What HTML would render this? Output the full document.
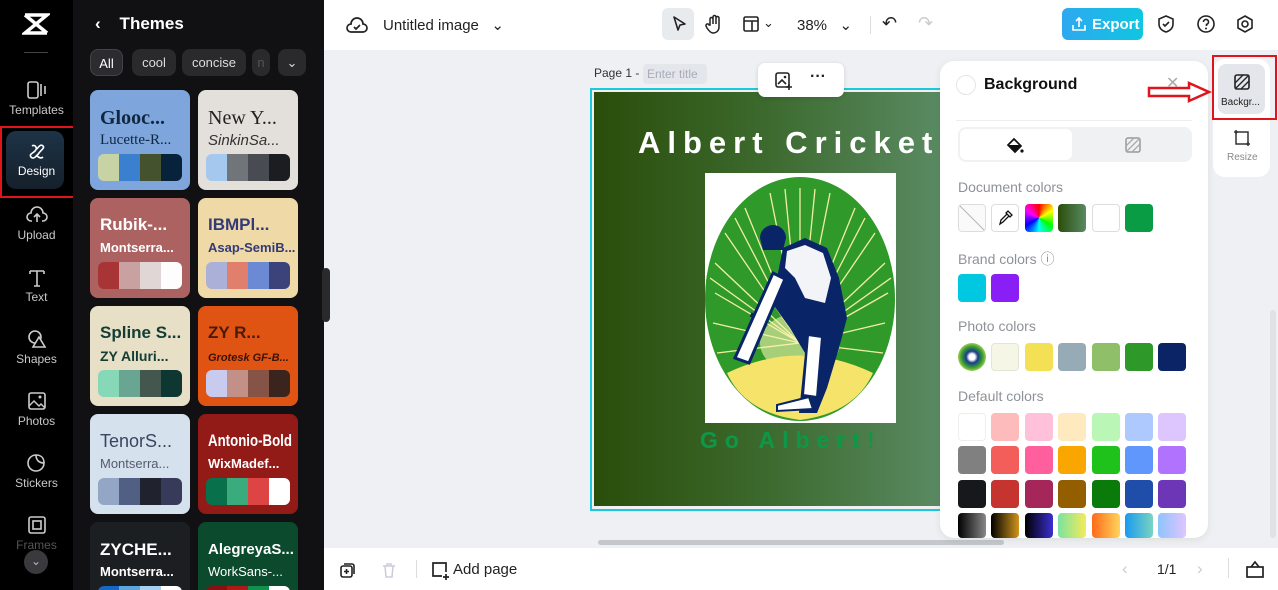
<!DOCTYPE html>
<html><head><meta charset="utf-8">
<style>
*{margin:0;padding:0;box-sizing:border-box}
html,body{width:1278px;height:590px;overflow:hidden}
body{font-family:"Liberation Sans",sans-serif;background:#eef0f3;position:relative}
.abs{position:absolute}
.rail{left:0;top:0;width:73px;height:590px;background:#000;overflow:hidden}
.ri{position:absolute;left:0;width:73px;text-align:center;color:#c9c9cc;font-size:12px}
.ri svg{display:block;margin:0 auto 3px}
.panel{left:73px;top:0;width:251px;height:590px;background:#111113;overflow:hidden}
.card{position:absolute;width:100px;height:100px;border-radius:8px;overflow:hidden}
.card .t1{position:absolute;left:10px;top:17px;font-size:17px;font-weight:bold;white-space:nowrap}
.card .t2{position:absolute;left:10px;top:42px;font-size:13px;white-space:nowrap}
.sw{position:absolute;left:8px;top:64px;width:84px;height:27px;border-radius:6px;overflow:hidden;display:flex}
.sw i{flex:1}
.chip{position:absolute;top:49px;height:27px;border-radius:8px;background:#2a2a2d;color:#ddd;font-size:13px;line-height:27px;text-align:center}
.top{left:324px;top:0;width:954px;height:50px;background:#fff}
.bot{left:324px;top:548px;width:954px;height:42px;background:#fff}
.bg{left:940px;top:61px;width:268px;height:477px;background:#fff;border-radius:14px;box-shadow:0 2px 8px rgba(0,0,0,.08);overflow:hidden}
.lbl{position:absolute;left:18px;color:#8e9298;font-size:14px}
.s{position:absolute;width:28px;height:28px;border-radius:4px}
</style></head><body>
<div class="abs rail">
  <svg class="abs" style="left:22px;top:12px" width="28" height="24" viewBox="0 0 28 24"><path d="M3 3h22L3 21h22M3 3l22 18" stroke="#fff" stroke-width="3.5" fill="none"/></svg>
  <div class="abs" style="left:24px;top:52px;width:24px;height:1px;background:#444"></div>
  <div class="ri" style="top:80px"><svg width="22" height="20"><rect x="2" y="2" width="10" height="16" rx="2" stroke="#ccc" stroke-width="1.6" fill="none"/><path d="M15 4v12M19 6v8" stroke="#ccc" stroke-width="1.6"/></svg>Templates</div>
  <div class="abs" style="left:6px;top:131px;width:58px;height:58px;border-radius:10px;background:linear-gradient(#1d3347,#15202b)"></div>
  <div class="ri" style="top:143px;color:#fff"><svg width="20" height="18" viewBox="0 0 20 18"><path d="M5 3c3-2 6 2 3 5s-6 3-4 6 6-1 8-4 6-5 4-7-4 0-6 3M9 12c2 2 5 4 7 2" stroke="#fff" stroke-width="1.6" fill="none"/></svg>Design</div>
  <div class="ri" style="top:205px"><svg width="22" height="20"><path d="M6 16H5a4 4 0 0 1 0-8 6 6 0 0 1 12 0 4 4 0 0 1 0 8h-1M11 17V9M8 12l3-3 3 3" stroke="#ccc" stroke-width="1.6" fill="none"/></svg>Upload</div>
  <div class="ri" style="top:267px"><svg width="22" height="20"><path d="M4 4h14M11 4v15M4 4v3M18 4v3M8 19h6" stroke="#ccc" stroke-width="1.6" fill="none"/></svg>Text</div>
  <div class="ri" style="top:329px"><svg width="22" height="20"><circle cx="9" cy="8" r="6" stroke="#ccc" stroke-width="1.6" fill="none"/><path d="M13 8l6 10H7z" stroke="#ccc" stroke-width="1.6" fill="#000"/></svg>Shapes</div>
  <div class="ri" style="top:391px"><svg width="22" height="20"><rect x="3" y="2" width="16" height="16" rx="2" stroke="#ccc" stroke-width="1.6" fill="none"/><path d="M3 15l5-5 5 5 2-2 4 4" stroke="#ccc" stroke-width="1.4" fill="none"/><circle cx="14" cy="6" r="1.5" fill="#ccc"/></svg>Photos</div>
  <div class="ri" style="top:453px"><svg width="22" height="20"><path d="M18 10a8 8 0 1 1-8-8c0 5 3 8 8 8zM10 2c6 0 8 4 8 8" stroke="#ccc" stroke-width="1.6" fill="none"/></svg>Stickers</div>
  <div class="ri" style="top:515px;color:#555"><svg width="22" height="20"><rect x="3" y="2" width="16" height="16" rx="2" stroke="#ccc" stroke-width="1.6" fill="none"/><rect x="7" y="6" width="8" height="8" stroke="#ccc" stroke-width="1.6" fill="none"/></svg>Frames</div>
  <div class="abs" style="left:24px;top:550px;width:24px;height:24px;border-radius:50%;background:#3a3a3e;color:#bbb;font-size:12px;text-align:center;line-height:22px">⌄</div>
</div>
<div class="abs" style="left:0;top:126px;width:77px;height:72px;border:2px solid #e0141c"></div>
<svg class="abs" style="left:78px;top:155px" width="66" height="24"><path d="M2 12L20 3v5h42v8H20v5z" fill="none" stroke="#e0141c" stroke-width="2.5"/></svg>
<div class="abs panel">
  <div class="abs" style="left:22px;top:14px;color:#fff;font-size:17px;font-weight:bold">‹&nbsp;&nbsp;&nbsp;&nbsp;Themes</div>
  <div class="chip" style="left:17px;width:33px;background:#2c2c30;border:1px solid #444;color:#fff">All</div>
  <div class="chip" style="left:59px;width:44px">cool</div>
  <div class="chip" style="left:109px;width:64px">concise</div>
  <div class="chip" style="left:179px;width:18px;color:#555">n</div>
  <div class="chip" style="left:205px;width:28px">⌄</div>
  <div class="card" style="left:17px;top:90px;background:#7ea6dc"><div class="t1" style="color:#0f2740;font-family:'Liberation Serif',serif;font-size:20px">Glooc...</div><div class="t2" style="color:#0f2740;font-family:'Liberation Serif',serif;font-size:15px">Lucette-R...</div><div class="sw"><i style="background:#c8d3a5"></i><i style="background:#3b7fcf"></i><i style="background:#44522d"></i><i style="background:#07233c"></i></div></div>
  <div class="card" style="left:125px;top:90px;background:#e3dfda"><div class="t1" style="color:#222;font-weight:normal;font-family:'Liberation Serif',serif;font-size:20px">New Y...</div><div class="t2" style="color:#333;font-style:italic;font-size:15px">SinkinSa...</div><div class="sw"><i style="background:#a5c8ee"></i><i style="background:#707579"></i><i style="background:#484c52"></i><i style="background:#1b1d21"></i></div></div>
  <div class="card" style="left:17px;top:198px;background:#ad6262"><div class="t1" style="color:#fff">Rubik-...</div><div class="t2" style="color:#fff;font-weight:bold">Montserra...</div><div class="sw"><i style="background:#a83436"></i><i style="background:#c9a1a1"></i><i style="background:#e0d6d6"></i><i style="background:#fdfdfd"></i></div></div>
  <div class="card" style="left:125px;top:198px;background:#efd9a6"><div class="t1" style="color:#343a78">IBMPl...</div><div class="t2" style="color:#343a78;font-weight:bold">Asap-SemiB...</div><div class="sw"><i style="background:#abb0d8"></i><i style="background:#e07f6c"></i><i style="background:#6b8ad3"></i><i style="background:#3c427a"></i></div></div>
  <div class="card" style="left:17px;top:306px;background:#e7dfc6"><div class="t1" style="color:#123d34">Spline S...</div><div class="t2" style="color:#123d34;font-weight:bold;font-size:14px">ZY Alluri...</div><div class="sw"><i style="background:#86d8b6"></i><i style="background:#68a593"></i><i style="background:#44574f"></i><i style="background:#0e3731"></i></div></div>
  <div class="card" style="left:125px;top:306px;background:#df5413"><div class="t1" style="color:#4a1a0a">ZY R...</div><div class="t2" style="color:#3a1408;font-style:italic;font-weight:bold;font-size:11px;top:46px">Grotesk GF-B...</div><div class="sw"><i style="background:#c8cbee"></i><i style="background:#c39088"></i><i style="background:#865347"></i><i style="background:#3a241d"></i></div></div>
  <div class="card" style="left:17px;top:414px;background:#d5e1ed"><div class="t1" style="color:#3d4460;font-weight:normal;font-size:18px">TenorS...</div><div class="t2" style="color:#555b6e">Montserra...</div><div class="sw"><i style="background:#94a6c6"></i><i style="background:#525f85"></i><i style="background:#20222d"></i><i style="background:#383a59"></i></div></div>
  <div class="card" style="left:125px;top:414px;background:#921a17"><div class="t1" style="color:#fff;font-size:17px;transform:scaleX(.78);transform-origin:left">Antonio-Bold</div><div class="t2" style="color:#fff;font-weight:bold">WixMadef...</div><div class="sw"><i style="background:#08704a"></i><i style="background:#39ab7c"></i><i style="background:#dd4545"></i><i style="background:#fff"></i></div></div>
  <div class="card" style="left:17px;top:522px;background:#1c1f22"><div class="t1" style="color:#fff;top:18px">ZYCHE...</div><div class="t2" style="color:#fff;font-weight:bold">Montserra...</div><div class="sw"><i style="background:#1567c8"></i><i style="background:#5aa7e0"></i><i style="background:#a9cfee"></i><i style="background:#fff"></i></div></div>
  <div class="card" style="left:125px;top:522px;background:#0b4a2c"><div class="t1" style="color:#fff;font-size:15px;top:19px">AlegreyaS...</div><div class="t2" style="color:#fff">WorkSans-...</div><div class="sw"><i style="background:#8a1010"></i><i style="background:#b01818"></i><i style="background:#13914a"></i><i style="background:#fff"></i></div></div>
</div>
<div class="abs" style="left:322px;top:268px;width:8px;height:54px;border-radius:4px;background:#2a2a2d"></div>
<div class="abs top">
  <svg class="abs" style="left:22px;top:15px" width="22" height="20"><path d="M6 17H5a4 4 0 0 1 0-8 6 6 0 0 1 12 0 4 4 0 0 1 0 8H6zM8 12l2 2 4-4" stroke="#222" stroke-width="1.7" fill="none"/></svg>
  <div class="abs" style="left:59px;top:16px;font-size:15px;color:#222">Untitled image &nbsp;&nbsp;⌄</div>
  <div class="abs" style="left:338px;top:8px;width:32px;height:32px;border-radius:6px;background:#e8ebee"></div>
  <svg class="abs" style="left:346px;top:15px" width="18" height="18"><path d="M4 2l11 7-5 1-2 5z" stroke="#222" stroke-width="1.6" fill="none" stroke-linejoin="round"/></svg>
  <svg class="abs" style="left:380px;top:14px" width="20" height="20"><path d="M6 11V5a1.5 1.5 0 0 1 3 0v5V3a1.5 1.5 0 0 1 3 0v7V4a1.5 1.5 0 0 1 3 0v9c0 4-3 6-6 6-2 0-4-2-6-5l-1-2a1.5 1.5 0 0 1 3-1z" stroke="#222" stroke-width="1.5" fill="none"/></svg>
  <svg class="abs" style="left:418px;top:15px" width="18" height="18"><rect x="2" y="2" width="14" height="14" rx="1.5" stroke="#222" stroke-width="1.6" fill="none"/><path d="M2 6h14M10 6v10" stroke="#222" stroke-width="1.6"/></svg>
  <div class="abs" style="left:439px;top:15px;font-size:13px;color:#222">⌄</div>
  <div class="abs" style="left:473px;top:16px;font-size:15px;color:#222">38% &nbsp;&nbsp;⌄</div>
  <div class="abs" style="left:546px;top:16px;width:1px;height:18px;background:#ddd"></div>
  <div class="abs" style="left:558px;top:13px;font-size:18px;color:#222">↶</div>
  <div class="abs" style="left:594px;top:13px;font-size:18px;color:#ccc">↷</div>
  <div class="abs" style="left:738px;top:8px;width:81px;height:32px;border-radius:6px;background:linear-gradient(90deg,#2fa8f0,#0fc6e0)"></div>
  <svg class="abs" style="left:747px;top:16px" width="16" height="16"><path d="M8 11V2M5 5l3-3 3 3M2 9v5h12V9" stroke="#fff" stroke-width="1.6" fill="none"/></svg>
  <div class="abs" style="left:768px;top:16px;color:#fff;font-size:15px;font-weight:bold">Export</div>
  <svg class="abs" style="left:832px;top:14px" width="20" height="20"><path d="M10 2l7 3v5c0 4-3 7-7 8-4-1-7-4-7-8V5z M7 10l2 2 4-4" stroke="#222" stroke-width="1.6" fill="none"/></svg>
  <svg class="abs" style="left:872px;top:14px" width="20" height="20"><circle cx="10" cy="10" r="8" stroke="#222" stroke-width="1.6" fill="none"/><path d="M7.5 8a2.5 2.5 0 1 1 3 2.4V12" stroke="#222" stroke-width="1.6" fill="none"/><circle cx="10" cy="14.5" r="1" fill="#222"/></svg>
  <svg class="abs" style="left:911px;top:14px" width="20" height="20"><path d="M10 2l7 4v8l-7 4-7-4V6z" stroke="#222" stroke-width="1.6" fill="none"/><circle cx="10" cy="10" r="3" stroke="#222" stroke-width="1.6" fill="none"/></svg>
</div>
<div class="abs" style="left:594px;top:66px;font-size:12px;color:#333">Page 1 -</div>
<div class="abs" style="left:643px;top:64px;width:64px;height:20px;background:#e3e6ea;border-radius:4px;font-size:12px;color:#aab;line-height:20px;padding-left:4px">Enter title</div>
<div class="abs" style="left:590px;top:88px;width:352px;height:423px;border:2px solid #1ec8dc"></div>
<div class="abs" style="left:594px;top:92px;width:346px;height:414px;background:linear-gradient(90deg,#2a4d0a 0%,#3c6a2e 50%,#5a8a62 100%)"></div>
<div class="abs" style="left:638px;top:125px;font-size:31px;font-weight:bold;color:#fff;letter-spacing:7px;white-space:nowrap;width:302px;overflow:hidden">Albert Cricket</div>
<svg class="abs" style="left:705px;top:173px" width="191" height="250" viewBox="0 0 191 250">
<rect width="191" height="250" fill="#fff"/>
<ellipse cx="95" cy="126" rx="95" ry="122" fill="#2f9a2a"/>
<g stroke="#f3eea0" stroke-width="1.3">
<path d="M95 170L10 90M95 170L20 60M95 170L40 35M95 170L65 20M95 170L95 15M95 170L125 20M95 170L150 35M95 170L170 60M95 170L180 90M95 170L183 120M95 170L180 150M95 170L10 120M95 170L8 150M95 170L12 180M95 170L178 180M95 170L30 45M95 170L80 16M95 170L110 16M95 170L160 45M95 170L186 105M95 170L5 105"/>
</g>
<ellipse cx="95" cy="170" rx="40" ry="30" fill="#f9f3b0" opacity=".6"/>
<path d="M22 200Q95 165 168 200Q150 240 95 247Q40 240 22 200z" fill="#f6e36a"/>
<path d="M55 65a13 13 0 0 1 26 0l-3 12h-20z" fill="#0a2468"/>
<path d="M78 75l22-10 22 10 12 30 8 40-8 30-12 40-10 25h-18l6-60-15-25-18-25z" fill="#0a2468"/>
<path d="M82 78l18-6 18 8 8 25-6 25-20-5-10-20-10-10z" fill="#f2f4f8"/>
<path d="M48 140l-2 4M30 185l38-85 12 6-36 84z" fill="#fff" stroke="#0a2468" stroke-width="3"/>
<path d="M103 162l14 2-5 60-14-2z" fill="#fff" stroke="#0a2468" stroke-width="2"/>
<path d="M72 232l32-8 4 12-36 2z" fill="#fff" stroke="#0a2468" stroke-width="2"/>
</svg>
<div class="abs" style="left:700px;top:427px;font-size:23px;font-weight:bold;color:#0d9848;letter-spacing:7px">Go Albert!</div>
<div class="abs" style="left:758px;top:63px;width:86px;height:34px;background:#fff;border-radius:7px;box-shadow:0 1px 4px rgba(0,0,0,.15)"></div>
<svg class="abs" style="left:774px;top:71px" width="20" height="20"><rect x="2" y="2" width="13" height="14" rx="2" stroke="#222" stroke-width="1.6" fill="none"/><path d="M4 13l4-4 4 4M15 13v6M12 16h6" stroke="#222" stroke-width="1.6" fill="none"/><circle cx="11" cy="6" r="1.3" fill="#222"/></svg>
<div class="abs" style="left:810px;top:68px;font-size:16px;font-weight:bold;color:#222">···</div>
<div class="abs" style="left:598px;top:540px;width:406px;height:5px;border-radius:3px;background:#c4c7cb"></div>
<div class="abs bg">
  <div class="abs" style="left:16px;top:14px;width:20px;height:20px;border-radius:50%;border:1px solid #e5e5e5"></div>
  <div class="abs" style="left:44px;top:15px;font-size:16px;font-weight:bold;color:#111">Background</div>
  <div class="abs" style="left:226px;top:12px;font-size:16px;color:#aaa">✕</div>
  <div class="abs" style="left:16px;top:59px;width:236px;height:1px;background:#eee"></div>
  <div class="abs" style="left:18px;top:66px;width:234px;height:35px;border-radius:8px;background:#f0f1f3"></div>
  <div class="abs" style="left:20px;top:68px;width:112px;height:31px;border-radius:6px;background:#fff"></div>
  <svg class="abs" style="left:65px;top:75px" width="20" height="18"><path d="M3 9l6-6 7 7-6 6z" stroke="#111" stroke-width="1.7" fill="none"/><path d="M3 9h13l-6 6z" fill="#111"/><circle cx="17" cy="15" r="1.6" fill="#111"/></svg>
  <svg class="abs" style="left:184px;top:75px" width="18" height="18"><rect x="2" y="2" width="14" height="14" rx="2" stroke="#999" stroke-width="1.5" fill="none"/><path d="M2 10l8-8M2 16L16 2M8 16l8-8" stroke="#aaa" stroke-width="1.3"/></svg>
  <div class="lbl" style="top:118px">Document colors</div>
  <div class="s" style="left:18px;top:143px;border:1px solid #ddd;background:linear-gradient(45deg,#fafafa 48%,#bbb 49%,#bbb 51%,#fafafa 52%)"></div>
  <div class="s" style="left:51px;top:143px;border:1px solid #ddd;background:#fff"></div>
  <svg class="abs" style="left:57px;top:149px" width="16" height="16"><path d="M3 14l1-4 6-6 2 2-6 6zM9 3l2-2 4 4-2 2z" stroke="#111" stroke-width="1.3" fill="none"/></svg>
  <div class="s" style="left:85px;top:143px;background:conic-gradient(#f00,#ff0,#0f0,#0ff,#00f,#f0f,#f00)"></div>
  <div class="s" style="left:118px;top:143px;background:linear-gradient(90deg,#2a4d0a,#5a8a62)"></div>
  <div class="s" style="left:152px;top:143px;border:1px solid #ddd;background:#fff"></div>
  <div class="s" style="left:185px;top:143px;background:#0a9b45"></div>
  <div class="lbl" style="top:188px">Brand colors ⓘ</div>
  <div class="s" style="left:18px;top:213px;background:#00c8e0"></div>
  <div class="s" style="left:51px;top:213px;background:#8a1ff5"></div>
  <div class="lbl" style="top:257px">Photo colors</div>
  <div class="s" style="left:18px;top:282px;border-radius:50%;background:radial-gradient(circle,#fff 15%,#1a3a8a 30%,#3aa52e 55%,#e8e070 80%)"></div>
  <div class="s" style="left:51px;top:282px;background:#f5f6e6;border:1px solid #e5e5d5"></div>
  <div class="s" style="left:85px;top:282px;background:#f4e055"></div>
  <div class="s" style="left:118px;top:282px;background:#97abb6"></div>
  <div class="s" style="left:152px;top:282px;background:#8fbf69"></div>
  <div class="s" style="left:185px;top:282px;background:#2e9829"></div>
  <div class="s" style="left:218px;top:282px;background:#0a2466"></div>
  <div class="lbl" style="top:327px">Default colors</div>
  <div class="s" style="left:18px;top:352px;background:#fff;border:1px solid #eee"></div>
  <div class="s" style="left:51px;top:352px;background:#fdbcbb"></div>
  <div class="s" style="left:85px;top:352px;background:#ffc0da"></div>
  <div class="s" style="left:118px;top:352px;background:#ffeabf"></div>
  <div class="s" style="left:152px;top:352px;background:#baf6b6"></div>
  <div class="s" style="left:185px;top:352px;background:#adc9fd"></div>
  <div class="s" style="left:218px;top:352px;background:#dcc6fd"></div>
  <div class="s" style="left:18px;top:385px;background:#808080"></div>
  <div class="s" style="left:51px;top:385px;background:#f45e5a"></div>
  <div class="s" style="left:85px;top:385px;background:#ff5f9c"></div>
  <div class="s" style="left:118px;top:385px;background:#f9a700"></div>
  <div class="s" style="left:152px;top:385px;background:#1fc21a"></div>
  <div class="s" style="left:185px;top:385px;background:#5f97fd"></div>
  <div class="s" style="left:218px;top:385px;background:#b172fd"></div>
  <div class="s" style="left:18px;top:419px;background:#16181c"></div>
  <div class="s" style="left:51px;top:419px;background:#c5342f"></div>
  <div class="s" style="left:85px;top:419px;background:#a5275a"></div>
  <div class="s" style="left:118px;top:419px;background:#925e00"></div>
  <div class="s" style="left:152px;top:419px;background:#0a7a0a"></div>
  <div class="s" style="left:185px;top:419px;background:#1f4eaa"></div>
  <div class="s" style="left:218px;top:419px;background:#6c36b7"></div>
  <div class="s" style="left:18px;top:452px;height:25px;background:linear-gradient(90deg,#000,#888)"></div>
  <div class="s" style="left:51px;top:452px;height:25px;background:linear-gradient(90deg,#000,#d1941c)"></div>
  <div class="s" style="left:85px;top:452px;height:25px;background:linear-gradient(90deg,#000,#3a2fd0)"></div>
  <div class="s" style="left:118px;top:452px;height:25px;background:linear-gradient(90deg,#7ae3a0,#f5ea5a)"></div>
  <div class="s" style="left:152px;top:452px;height:25px;background:linear-gradient(90deg,#ff6a1a,#ffd45c)"></div>
  <div class="s" style="left:185px;top:452px;height:25px;background:linear-gradient(90deg,#1a9af0,#7ad4c0)"></div>
  <div class="s" style="left:218px;top:452px;height:25px;background:linear-gradient(90deg,#8ec4ff,#e0c4ff)"></div>
</div>
<div class="abs" style="left:1270px;top:310px;width:6px;height:228px;background:#dfe2e6;border-radius:3px"></div>
<div class="abs" style="left:1213px;top:59px;width:57px;height:118px;background:#fff;border-radius:12px"></div>
<div class="abs" style="left:1218px;top:64px;width:47px;height:50px;background:#e3e6ea;border-radius:8px"></div>
<svg class="abs" style="left:1233px;top:73px" width="18" height="18"><rect x="2" y="2" width="14" height="14" rx="2" stroke="#222" stroke-width="1.6" fill="none"/><path d="M2 10l8-8M2 16L16 2M8 16l8-8" stroke="#222" stroke-width="1.3"/></svg>
<div class="abs" style="left:1221px;top:97px;font-size:10px;color:#222">Backgr...</div>
<svg class="abs" style="left:1233px;top:129px" width="18" height="18"><rect x="3" y="3" width="12" height="12" stroke="#333" stroke-width="1.5" fill="none"/><path d="M3 1v4M15 13v4M1 3h4M13 15h4" stroke="#333" stroke-width="1.5"/></svg>
<div class="abs" style="left:1227px;top:152px;font-size:10px;color:#888">Resize</div>
<div class="abs" style="left:1212px;top:55px;width:65px;height:65px;border:2px solid #e0141c"></div>
<svg class="abs" style="left:1147px;top:80px" width="66" height="24"><path d="M2 8h40V3l20 9-20 9v-5H2z" fill="none" stroke="#e0141c" stroke-width="2.5"/></svg>
<div class="abs bot">
  <svg class="abs" style="left:15px;top:13px" width="18" height="18"><rect x="2" y="5" width="11" height="11" rx="2" stroke="#222" stroke-width="1.6" fill="none"/><path d="M5 3h8a2 2 0 0 1 2 2v8M7.5 8v5M5 10.5h5" stroke="#222" stroke-width="1.6" fill="none"/></svg>
  <svg class="abs" style="left:56px;top:13px" width="18" height="18"><path d="M3 5h12M7 5V3h4v2M5 5l1 11h6l1-11" stroke="#ccd" stroke-width="1.5" fill="none"/></svg>
  <div class="abs" style="left:92px;top:12px;width:1px;height:18px;background:#ddd"></div>
  <svg class="abs" style="left:106px;top:12px" width="20" height="20"><path d="M12 16H3V3h13v9M16 14v6M13 17h6" stroke="#222" stroke-width="1.7" fill="none"/></svg>
  <div class="abs" style="left:129px;top:13px;font-size:15px;color:#222">Add page</div>
  <div class="abs" style="left:798px;top:11px;font-size:17px;color:#ccc">‹</div>
  <div class="abs" style="left:833px;top:13px;font-size:14px;color:#222">1/1</div>
  <div class="abs" style="left:873px;top:11px;font-size:17px;color:#ccc">›</div>
  <div class="abs" style="left:904px;top:10px;width:1px;height:20px;background:#ddd"></div>
  <svg class="abs" style="left:921px;top:11px" width="20" height="20"><rect x="2" y="8" width="16" height="10" stroke="#222" stroke-width="1.7" fill="none"/><path d="M6 8l4-5 4 5" stroke="#222" stroke-width="1.7" fill="none"/></svg>
</div>
</body></html>
